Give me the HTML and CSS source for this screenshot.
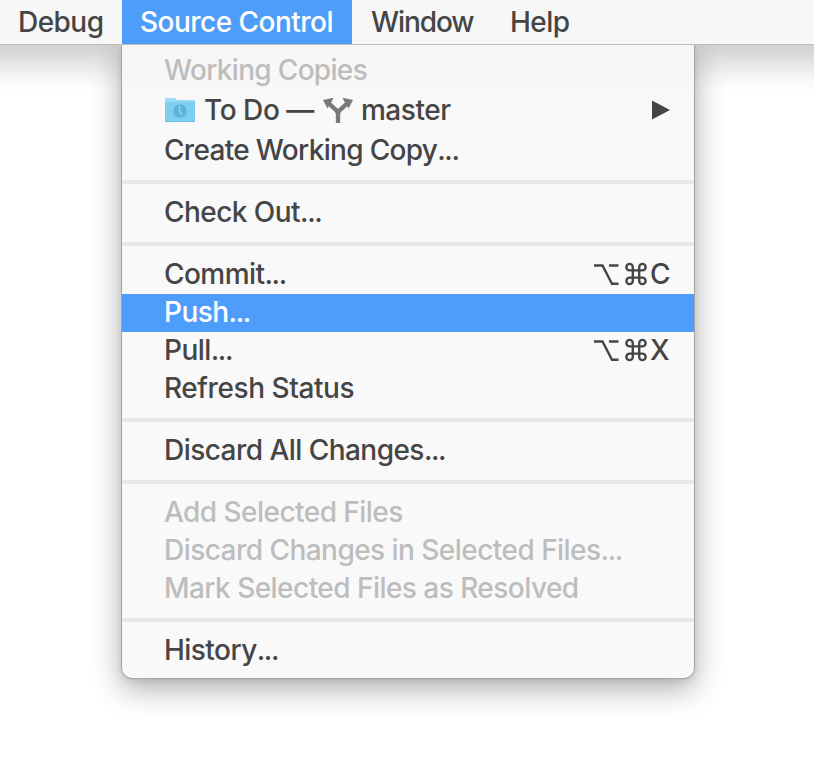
FILE: index.html
```html
<!DOCTYPE html>
<html lang="en">
<head>
<meta charset="utf-8">
<title>Source Control</title>
<link rel="stylesheet" href="styles.css">
</head>
<body>
<nav class="bar">
<span class="tab debug">Debug</span>
<span class="tab source">Source Control</span>
<span class="tab window">Window</span>
<span class="tab help">Help</span>
</nav>
<div class="stage">
<main class="menu">
<section class="group first">
<div class="row dim snug">Working Copies</div>
<div class="row copy">
<svg class="folder" viewBox="0 0 32 28" width="32" height="28"><path d="M1 6V3q0-1 1-1h8q1 0 2 1l1 1h17q1 0 1 1v3H1z" fill="#9bdaf3"/><path d="M1 6h30v19q0 1-1 1H2q-1 0-1-1z" fill="#7fcff1"/><path d="M1 25.5h30" stroke="#68bde0"/><circle cx="16" cy="15" r="6.8" fill="#5eb3d8"/><path d="M15.5 10v5.5l2.700 3.500" fill="none" stroke="#91d5f1" stroke-width="1.600"/></svg>
<span class="project">To Do</span><span class="dash">—</span>
<svg class="branch" viewBox="0 0 32 28" width="32" height="28"><path d="M16 27V18.500Q16 15.500 13.500 13.500L7 7.500M16 18.500Q16 15.500 18.500 13.500L25 7.500" fill="none" stroke="#797979" stroke-width="4.300"/><path d="M1 4 11.500 1.700 10 5 5.500 12.500zM31 4 20.500 1.700 22 5 26.500 12.500z" fill="#797979"/></svg>
<span class="name">master</span>
<svg class="arrow" viewBox="0 0 18 20" width="18" height="20"><path d="M0 .5 18 10 0 19.500z" fill="#454545"/></svg>
</div>
<div class="row snug">Create Working Copy<span class="dots">...</span></div>
</section>
<section class="group"><div class="row">Check Out<span class="dots">...</span></div></section>
<section class="group">
<div class="row"><span>Commit<span class="dots">...</span></span><span class="keys"><svg class="option" viewBox="0 0 26 24" width="26" height="24"><path d="M0 2.500h8.500L18 20.800h6.500M15 2.500h9.500" fill="none" stroke="#454545" stroke-width="2.400"/></svg><svg class="command" viewBox="0 0 24 24" width="22" height="22"><path d="M8 8H5a3.500 3.500 0 1 1 3.500-3.500v15A3.500 3.500 0 1 1 5 16h14a3.500 3.500 0 1 1-3.500 3.500v-15A3.500 3.500 0 1 1 19 8H8" fill="none" stroke="#454545" stroke-width="2.600"/></svg><span class="key">C</span></span></div>
<div class="row active">Push<span class="dots">...</span></div>
<div class="row"><span>Pull<span class="dots">...</span></span><span class="keys"><svg class="option" viewBox="0 0 26 24" width="26" height="24"><path d="M0 2.500h8.500L18 20.800h6.500M15 2.500h9.500" fill="none" stroke="#454545" stroke-width="2.400"/></svg><svg class="command" viewBox="0 0 24 24" width="22" height="22"><path d="M8 8H5a3.500 3.500 0 1 1 3.500-3.500v15A3.500 3.500 0 1 1 5 16h14a3.500 3.500 0 1 1-3.500 3.500v-15A3.500 3.500 0 1 1 19 8H8" fill="none" stroke="#454545" stroke-width="2.600"/></svg><span class="key">X</span></span></div>
<div class="row loose">Refresh Status</div>
</section>
<section class="group"><div class="row">Discard All Changes<span class="dots">...</span></div></section>
<section class="group"><div class="row dim">Add Selected Files</div><div class="row dim">Discard Changes in Selected Files<span class="dots">...</span></div><div class="row dim">Mark Selected Files as Resolved</div></section>
<section class="group last"><div class="row">History<span class="dots">...</span></div></section>
</main>
</div>
</body>
</html>
```
FILE: styles.css
```css
*{box-sizing:border-box}
body{margin:0;height:768px;overflow:hidden;background:#fff;color:#454545;font:450 28px/38px Inter,"Noto Sans",sans-serif;letter-spacing:-.54px}
svg{flex:none;overflow:visible}
.bar{display:flex;height:44px;background:#f7f7f7}
.tab{height:44px;line-height:44px;white-space:nowrap}
.debug{width:122px;padding-left:18px}
.source{width:230px;padding-left:18px;background:#4f9dfb;color:#fff;letter-spacing:-.52px}
.window{width:158px;padding-left:19px;letter-spacing:-1.1px}
.help{letter-spacing:-.5px}
.stage{height:724px;overflow:hidden;border-top:1px solid #bcbcbc;background:linear-gradient(#d3d3d3 0,#dadada 9px,#ececec 23px,#fafafa 37px,#fff 48px)}
.menu{width:574px;height:634px;margin-left:121px;border:1px solid #a4a4a4;border-top:0;border-radius:0 0 11px 11px;background:linear-gradient(#f6f6f6,#f9f9f9 80px);box-shadow:0 10px 30px rgba(0,0,0,.32),0 2px 6px rgba(0,0,0,.08)}
.group{padding:10px 0;border-bottom:4px solid #e7e7e7}
.first{padding-top:7px}
.last{padding-bottom:0;border:0}
.row{display:flex;align-items:center;height:38px;padding:0 23px 2px 42px;white-space:nowrap}
.dim{color:#bdbdbd}
.snug{letter-spacing:-.68px}
.loose{letter-spacing:-.42px}
.dots{letter-spacing:-1.4px}
.active{background:#4f9dfb;color:#fff}
.copy{height:42px;letter-spacing:-.45px}
.project{margin-left:8px}
.dash{margin-left:7px}
.branch{margin-left:8px}
.name{margin-left:7px}
.arrow{margin-left:auto;margin-right:1px}
.keys{display:flex;align-items:center;margin-left:auto}
.option{margin-top:2px}
.command{margin-left:5px}
.key{width:21px;margin-left:3px}
```
